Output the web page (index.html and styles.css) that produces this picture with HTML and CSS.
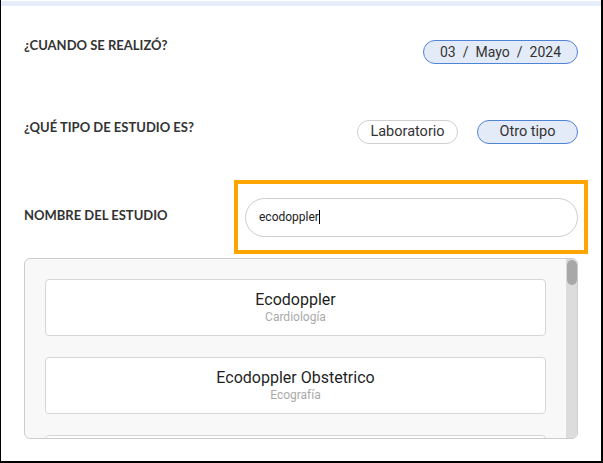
FILE: index.html
```html
<!DOCTYPE html>
<html lang="es">

<head>
    <meta charset="UTF-8">
    <meta name="viewport" content="width=device-width, initial-scale=1.0">
    <title>Nuevo estudio</title>
    <link rel="stylesheet" href="styles.css">
</head>

<body>
    <div class="page">
        <div class="top-band"></div>
        <form class="study-form">
            <div class="form-row row-date">
                <span class="field-label">¿CUANDO SE REALIZÓ?</span>
                <div class="pill pill-active date-pill">03<span class="sep">/</span>Mayo<span class="sep">/</span>2024</div>
            </div>
            <div class="form-row row-type">
                <span class="field-label">¿QUÉ TIPO DE ESTUDIO ES?</span>
                <div class="pill-group">
                    <button type="button" class="pill">Laboratorio</button>
                    <button type="button" class="pill pill-active">Otro tipo</button>
                </div>
            </div>
            <div class="form-row row-name">
                <span class="field-label">NOMBRE DEL ESTUDIO</span>
                <div class="highlight">
                    <div class="search-input">ecodoppler<span class="caret"></span></div>
                </div>
            </div>
            <div class="results">
                <div class="results-list">
                    <div class="result-card">
                        <div class="result-title">Ecodoppler</div>
                        <div class="result-sub">Cardiología</div>
                    </div>
                    <div class="result-card">
                        <div class="result-title">Ecodoppler Obstetrico</div>
                        <div class="result-sub">Ecografía</div>
                    </div>
                    <!-- next result, scrolled out of view -->
                    <div class="result-card"></div>
                </div>
                <div class="scrollbar">
                    <div class="scroll-thumb"></div>
                </div>
            </div>
        </form>
    </div>
</body>

</html>
```

FILE: styles.css
```css
body,
html {
    margin: 0;
    padding: 0;
    background: #fff;
}

.page {
    box-sizing: border-box;
    width: 603px;
    height: 463px;
    overflow: hidden;
    border-left: 1px solid #000;
    border-right: 2px solid #000;
    border-bottom: 2px solid #000;
    font-family: Roboto, "Liberation Sans", sans-serif;
    color: #222;
}

.top-band {
    height: 5px;
    margin-top: 1px;
    background-color: #e6edf8;
}

.study-form {
    padding: 34px 23px 0 23px;
}

.form-row {
    display: flex;
    justify-content: space-between;
    align-items: flex-start;
}

.field-label {
    font-family: Lato, "Open Sans", sans-serif;
    font-weight: 700;
    font-size: 13px;
    line-height: 16px;
    color: #333;
}

.row-date {
    height: 24px;
}

.row-date .field-label {
    margin-top: -3px;
}

.row-type {
    margin-top: 56px;
    height: 24px;
}

.row-type .field-label {
    margin-top: -1px;
}

.row-name {
    margin-top: 36px;
}

.row-name .field-label {
    margin-top: 27px;
}

.pill {
    box-sizing: border-box;
    height: 24px;
    padding: 0;
    border: 1px solid #cfcfcf;
    border-radius: 12px;
    background: #fff;
    font-family: Roboto, "Liberation Sans", sans-serif;
    font-size: 14.5px;
    line-height: 22px;
    color: #333;
    text-align: center;
}

.pill-active {
    border-color: #4f84d4;
    background-color: #e3ebf8;
}

.date-pill {
    width: 155px;
    font-size: 14px;
}

.sep {
    margin: 0 7px;
}

.pill-group {
    display: flex;
    gap: 19px;
}

.pill-group .pill {
    width: 101px;
}

.highlight {
    box-sizing: border-box;
    width: 354px;
    height: 74px;
    margin-right: -10px;
    padding: 14px 6px 0 7px;
    border: 4px solid #ffa500;
}

.search-input {
    box-sizing: border-box;
    height: 39px;
    padding-left: 13px;
    border: 1px solid #cdcdcd;
    border-radius: 20px;
    font-size: 12px;
    line-height: 37px;
    color: #222;
}

.caret {
    display: inline-block;
    width: 1px;
    height: 14px;
    vertical-align: -3px;
    background: #000;
}

.results {
    box-sizing: border-box;
    display: flex;
    height: 181px;
    margin-top: 4px;
    border: 1px solid #cccccc;
    border-radius: 6px;
    background-color: #f8f8f8;
    overflow: hidden;
}

.results-list {
    flex: 1;
    display: flex;
    flex-direction: column;
    gap: 21px;
    padding: 20px 20px 0 20px;
    overflow: hidden;
}

.result-card {
    box-sizing: border-box;
    flex: none;
    height: 57px;
    padding-top: 10px;
    border: 1px solid #d6d6d6;
    border-radius: 4px;
    background: #fff;
    text-align: center;
}

.result-title {
    font-size: 16px;
    line-height: 20px;
    color: #1f1f1f;
}

.result-sub {
    font-size: 12px;
    line-height: 14px;
    color: #aaaaaa;
}

.scrollbar {
    flex: none;
    width: 11px;
    padding: 1px 0 0 0;
    background-color: #dcdcdc;
}

.scroll-thumb {
    width: 10px;
    height: 25px;
    margin-left: 1px;
    border-radius: 5px;
    background-color: #a8a8a8;
}
```
